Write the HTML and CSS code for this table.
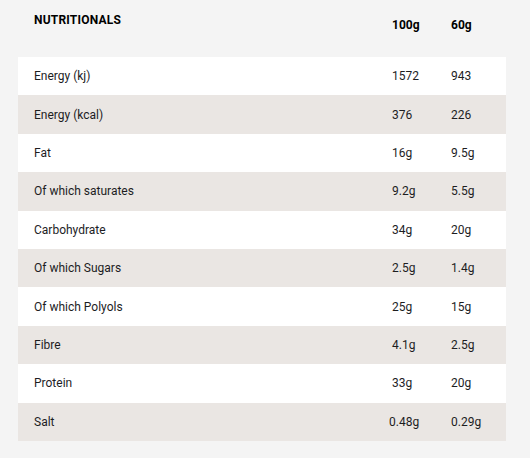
FILE: index.html
```html
<!DOCTYPE html>
<html>
<head>
<meta charset="utf-8">
<link rel="stylesheet" href="styles.css">
</head>
<body>
<div class="panel">
  <div class="head">
    <div class="title">NUTRITIONALS</div>
    <div class="hcol">100g</div>
    <div class="hcol">60g</div>
  </div>
  <div class="rows">
    <div class="row"><span class="lbl">Energy (kj)</span><span>1572</span><span>943</span></div>
    <div class="row alt"><span class="lbl">Energy (kcal)</span><span>376</span><span>226</span></div>
    <div class="row"><span class="lbl">Fat</span><span>16g</span><span>9.5g</span></div>
    <div class="row alt"><span class="lbl">Of which saturates</span><span>9.2g</span><span>5.5g</span></div>
    <div class="row"><span class="lbl">Carbohydrate</span><span>34g</span><span>20g</span></div>
    <div class="row alt"><span class="lbl">Of which Sugars</span><span>2.5g</span><span>1.4g</span></div>
    <div class="row"><span class="lbl">Of which Polyols</span><span>25g</span><span>15g</span></div>
    <div class="row alt"><span class="lbl">Fibre</span><span>4.1g</span><span>2.5g</span></div>
    <div class="row"><span class="lbl">Protein</span><span>33g</span><span>20g</span></div>
    <div class="row alt"><span class="lbl">Salt</span><span class="shift">0.48g</span><span>0.29g</span></div>
  </div>
</div>
</body>
</html>
```

FILE: styles.css
```css
html, body {
  margin: 0;
  padding: 0;
  background: #f4f4f4;
}
body {
  font-family: Roboto, "Liberation Sans", sans-serif;
  font-size: 12px;
  color: #1d1d1f;
}
.panel {
  width: 488px;
  margin-left: 18px;
}
.head {
  height: 57px;
  display: grid;
  grid-template-columns: 374px 59px 1fr;
  font-weight: 700;
  color: #000;
}
.title {
  padding-left: 16px;
  padding-top: 13px;
  letter-spacing: 0.2px;
}
.hcol {
  padding-top: 18px;
}
.rows {
  display: flex;
  flex-direction: column;
}
.row {
  height: 38.4px;
  display: grid;
  grid-template-columns: 374px 59px 1fr;
  align-items: center;
  background: #ffffff;
}
.row.alt {
  background: #eae6e3;
}
.lbl {
  padding-left: 16px;
}
.shift {
  margin-left: -3px;
}
```
